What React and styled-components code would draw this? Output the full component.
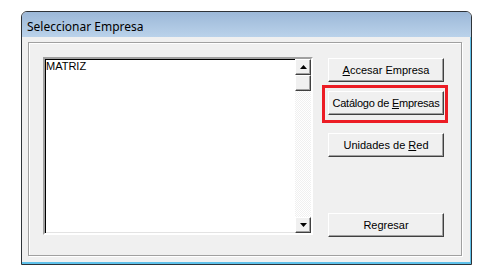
import * as React from "react"
import styled, { createGlobalStyle } from "styled-components"

const GlobalStyle = createGlobalStyle`
  html, body {
    margin: 0;
    padding: 0;
    background: #ffffff;
  }
`

const Window = styled.div`
  box-sizing: border-box;
  margin: 11px 0 0 21px;
  width: 451px;
  height: 254px;
  border: 1px solid #2e3338;
  border-radius: 6px 6px 0 0;
  display: flex;
  flex-direction: column;
  overflow: hidden;
  background: #f0f0f0;
`

const TitleBar = styled.div`
  height: 25px;
  flex: none;
  box-sizing: border-box;
  padding: 3px 0 0 5px;
  display: flex;
  align-items: center;
  background: linear-gradient(#9cb8d8, #bad2ea);
  font-family: "Noto Sans", "Open Sans", sans-serif;
  font-size: 12px;
  color: #000;
`

const Client = styled.div`
  flex: 1;
  box-sizing: border-box;
  padding: 5px 7px 5px 6px;
  border-right: 1px solid #5fc1ea;
  border-bottom: 2px solid #5fc1ea;
  background: #f0f0f0;
  display: flex;
`

const GroupBox = styled.div`
  box-sizing: border-box;
  width: 434px;
  height: 214px;
  border: 1px solid #a0a0a0;
  box-shadow: 1px 1px 0 #ffffff, inset 1px 1px 0 #ffffff;
  padding: 14px 0 0 14px;
  display: flex;
  gap: 15px;
  align-items: flex-start;
`

const ListBox = styled.div`
  box-sizing: border-box;
  width: 270px;
  height: 178px;
  border: 2px solid;
  border-color: #a0a0a0 #ffffff #ffffff #a0a0a0;
  box-shadow: inset 1px 1px 0 #000, inset -1px -1px 0 #e3e3e3;
  background: #fff;
  display: flex;
`

const ListItems = styled.div`
  flex: 1;
  padding: 1px 0 0 1px;
  font-family: "Liberation Sans", Arial, sans-serif;
  font-size: 11px;
  line-height: 13px;
  color: #000;
`

const ScrollBar = styled.div`
  width: 16px;
  display: flex;
  flex-direction: column;
  background: repeating-conic-gradient(#ffffff 0 25%, #f0f0f0 0 50%) 0 0 / 2px 2px;
`

const ScrollPart = styled.div`
  box-sizing: border-box;
  height: 16px;
  flex: none;
  display: flex;
  align-items: center;
  justify-content: center;
  background: #f0f0f0;
  border: 1px solid;
  border-color: #ffffff #404040 #404040 #ffffff;
  box-shadow: inset -1px -1px 0 #a0a0a0;
  margin-top: ${({ $bottom }) => ($bottom ? "auto" : "0")};
`

const Buttons = styled.div`
  width: 116px;
  padding-top: 1px;
  display: flex;
  flex-direction: column;
`

const Button = styled.div`
  position: relative;
  box-sizing: border-box;
  height: 24px;
  margin-top: ${({ $gap }) => $gap || 0}px;
  display: flex;
  align-items: center;
  justify-content: center;
  padding-bottom: 1px;
  background: #f0f0f0;
  border: 1px solid;
  border-color: #ffffff #404040 #404040 #ffffff;
  box-shadow: inset -1px -1px 0 #a0a0a0;
  font-family: "Liberation Sans", Arial, sans-serif;
  font-size: 11px;
  letter-spacing: ${({ $tight }) => ($tight ? "-0.25px" : "0")};
  color: #000;
  white-space: nowrap;
`

const Mnemonic = styled.span`
  text-decoration: underline;
  text-underline-offset: 1px;
`

const Highlight = styled.span`
  position: absolute;
  top: -7px;
  left: -7px;
  right: -5px;
  bottom: -9px;
  border: 3px solid #ec1c24;
  pointer-events: none;
`

const Arrow = ({ down }) => (
  <svg width="7" height="4" viewBox="0 0 7 4">
    {down ? (
      <polygon points="0,0 7,0 3.5,4" fill="#000" />
    ) : (
      <polygon points="0,4 7,4 3.5,0" fill="#000" />
    )}
  </svg>
)

export default function App() {
  return (
    <>
      <GlobalStyle />
      <Window>
        <TitleBar>Seleccionar Empresa</TitleBar>
        <Client>
          <GroupBox>
            <ListBox>
              <ListItems>MATRIZ</ListItems>
              <ScrollBar>
                <ScrollPart>
                  <Arrow />
                </ScrollPart>
                <ScrollPart />
                <ScrollPart $bottom>
                  <Arrow down />
                </ScrollPart>
              </ScrollBar>
            </ListBox>
            <Buttons>
              <Button>
                <span>
                  <Mnemonic>A</Mnemonic>ccesar Empresa
                </span>
              </Button>
              <Button $gap={9} $tight>
                <span>
                  Catálogo de <Mnemonic>E</Mnemonic>mpresas
                </span>
                <Highlight />
              </Button>
              <Button $gap={18}>
                <span>
                  Unidades de <Mnemonic>R</Mnemonic>ed
                </span>
              </Button>
              <Button $gap={56}>Regresar</Button>
            </Buttons>
          </GroupBox>
        </Client>
      </Window>
    </>
  )
}
